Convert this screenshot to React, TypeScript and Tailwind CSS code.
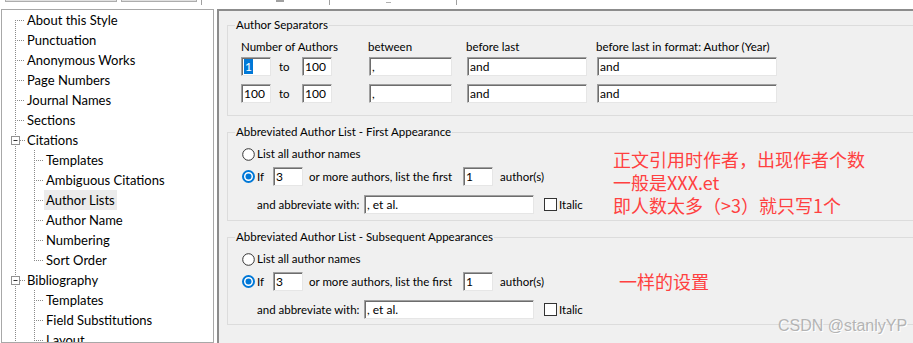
import React from "react"

type Item = { label: string; level: 0 | 1; first?: boolean; exp?: boolean; last?: boolean; sel?: boolean }

const items: Item[] = [
  { label: "About this Style", level: 0, first: true },
  { label: "Punctuation", level: 0 },
  { label: "Anonymous Works", level: 0 },
  { label: "Page Numbers", level: 0 },
  { label: "Journal Names", level: 0 },
  { label: "Sections", level: 0 },
  { label: "Citations", level: 0, exp: true },
  { label: "Templates", level: 1 },
  { label: "Ambiguous Citations", level: 1 },
  { label: "Author Lists", level: 1, sel: true },
  { label: "Author Name", level: 1 },
  { label: "Numbering", level: 1 },
  { label: "Sort Order", level: 1, last: true },
  { label: "Bibliography", level: 0, exp: true },
  { label: "Templates", level: 1 },
  { label: "Field Substitutions", level: 1 },
  { label: "Layout", level: 1 },
]

const dot = { stroke: "#8a8a8a", strokeWidth: 1, strokeDasharray: "1 1" }

function Gutter({ it }: { it: Item }) {
  if (it.level === 0) {
    return (
      <svg width="23" height="20" className="shrink-0">
        <line x1="13.5" y1={it.first ? 10 : 0} x2="13.5" y2="20" {...dot} />
        <line x1={it.exp ? 18 : 15} y1="10.5" x2="23" y2="10.5" {...dot} />
        {it.exp && (
          <g>
            <rect x="9.5" y="6.5" width="8" height="8" fill="#fff" stroke="#919191" />
            <line x1="11.5" y1="10.5" x2="15.5" y2="10.5" stroke="#333" />
          </g>
        )}
      </svg>
    )
  }
  return (
    <svg width="42" height="20" className="shrink-0">
      <line x1="13.5" y1="0" x2="13.5" y2="20" {...dot} />
      <line x1="32.5" y1="0" x2="32.5" y2={it.last ? 11 : 20} {...dot} />
      <line x1="34" y1="10.5" x2="42" y2="10.5" {...dot} />
    </svg>
  )
}

function Box({ w, v, sel }: { w: string; v: string; sel?: boolean }) {
  return (
    <div
      className={`${w} shrink-0 h-[19px] bg-white border border-[#a0a0a0] border-b-[#e6e6e6] border-r-[#e6e6e6] shadow-[inset_1px_1px_0_#6d6d6d] pl-[2px] flex items-center text-[12px] leading-[15px] whitespace-nowrap`}
    >
      {sel ? <span className="bg-[#0078d7] text-white px-[1px]">{v}</span> : <span>{v}</span>}
    </div>
  )
}

function Radio({ on }: { on?: boolean }) {
  return (
    <svg width="13" height="13" className="shrink-0">
      {on ? (
        <g>
          <circle cx="6.5" cy="6.5" r="5.5" fill="#fff" stroke="#0078d7" strokeWidth="2" />
          <circle cx="6.5" cy="6.5" r="3" fill="#0078d7" />
        </g>
      ) : (
        <circle cx="6.5" cy="6.5" r="5.8" fill="#fff" stroke="#333" strokeWidth="1" />
      )}
    </svg>
  )
}

function AbbrevGroup({ title, mt, pb }: { title: string; mt: string; pb: string }) {
  return (
    <fieldset className={`${mt} ${pb} w-[720px] border border-[#dcdcdc] pl-[14px] pt-[6px] whitespace-nowrap`}>
      <legend className="-ml-[7px] px-[1px] leading-[16px]">{title}</legend>
      <div className="flex items-center h-[16px]">
        <Radio />
        <span className="ml-[2px]">List all author names</span>
      </div>
      <div className="flex items-center mt-[5px]">
        <Radio on />
        <span className="ml-[2px] w-[16px]">If</span>
        <Box w="w-[30px]" v="3" />
        <span className="ml-[6px] w-[154px]">or more authors, list the first</span>
        <Box w="w-[30px]" v="1" />
        <span className="ml-[7px]">author(s)</span>
      </div>
      <div className="flex items-center mt-[9px] pl-[15px]">
        <span className="w-[107px]">and abbreviate with:</span>
        <Box w="w-[170px]" v=", et al." />
        <div className="ml-[10px] w-[13px] h-[13px] bg-white border border-[#333]" />
        <span className="ml-[2px]">Italic</span>
      </div>
    </fieldset>
  )
}

export default function App() {
  return (
    <div className="w-[913px] h-[343px] bg-white overflow-hidden relative font-['Lato',sans-serif] text-[11.5px] text-black">
      <div className="h-[9px] flex items-start">
        <div className="ml-[5px] w-[112px] h-[2px] bg-[#e1e1e1] border-x border-b border-[#adadad]" />
        <div className="ml-[4px] w-[76px] h-[2px] bg-[#e1e1e1] border-x border-b border-[#adadad]" />
        <div className="ml-[4px] w-px h-[5px] bg-[#a0a0a0]" />
        <div className="ml-[74px] w-[8px] h-[2px] bg-[#a0a0a0]" />
        <div className="ml-[45px] w-px h-[5px] bg-[#a0a0a0]" />
        <div className="ml-[56px] w-[5px] h-px mt-[2px] bg-[#b0b0b0]" />
        <div className="ml-[65px] w-px h-[5px] bg-[#a0a0a0]" />
      </div>
      <div className="flex">
        <div className="ml-[1px] w-[213px] h-[334px] border border-[#a8a8a8] overflow-hidden text-[13px]">
          {items.map((it, i) => (
            <div key={i} className="flex items-center h-[20px]">
              <Gutter it={it} />
              <span className={`px-[2px] leading-[20px] whitespace-nowrap ${it.sel ? "bg-[#ebebeb]" : ""}`}>{it.label}</span>
            </div>
          ))}
        </div>
        <div className="ml-[3px] flex-1 h-[334px] bg-[#f0f0f0] border-t-2 border-l-2 border-[#8c8c8c] overflow-hidden relative pl-[8px]">
          <fieldset className="mt-[6px] w-[720px] border border-[#dcdcdc] pl-[13px] pt-[6px] pb-[12px] whitespace-nowrap">
            <legend className="-ml-[6px] px-[1px] leading-[16px]">Author Separators</legend>
            <div className="flex h-[16px] leading-[16px]">
              <span className="w-[127px]">Number of Authors</span>
              <span className="w-[98px]">between</span>
              <span className="w-[130px]">before last</span>
              <span>before last in format: Author (Year)</span>
            </div>
            {[["1", true], ["100", false]].map(([a, s], i) => (
              <div key={i} className={`flex items-center ${i === 0 ? "mt-[2px]" : "mt-[8px]"}`}>
                <Box w="w-[30px]" v={a as string} sel={s as boolean} />
                <span className="w-[31px] pl-[8px]">to</span>
                <Box w="w-[30px]" v="100" />
                <div className="w-[37px]" />
                <Box w="w-[83px]" v="," />
                <div className="w-[15px]" />
                <Box w="w-[120px]" v="and" />
                <div className="w-[10px]" />
                <Box w="w-[180px]" v="and" />
              </div>
            ))}
          </fieldset>
          <AbbrevGroup title="Abbreviated Author List - First Appearance" mt="mt-[8px]" pb="pb-[6px]" />
          <AbbrevGroup title="Abbreviated Author List - Subsequent Appearances" mt="mt-[8px]" pb="pb-[5px]" />
          <div className="absolute left-[394px] top-[137px] text-[18px] leading-[23px] text-[#ff4040] font-['Noto_Sans_CJK_SC',sans-serif] whitespace-nowrap">
            <div>正文引用时作者，出现作者个数</div>
            <div>一般是XXX.et</div>
            <div>即人数太多（&gt;3）就只写1个</div>
          </div>
          <div className="absolute left-[400px] top-[259px] text-[18px] leading-[22px] text-[#ff4040] font-['Noto_Sans_CJK_SC',sans-serif]">
            一样的设置
          </div>
        </div>
      </div>
      <div className="absolute left-[778px] top-[316px] text-[16px] leading-[19px] text-[#b4b4b4] [text-shadow:1px_1px_0_#ffffff] font-['Liberation_Sans',sans-serif]">
        CSDN @stanlyYP
      </div>
    </div>
  )
}
